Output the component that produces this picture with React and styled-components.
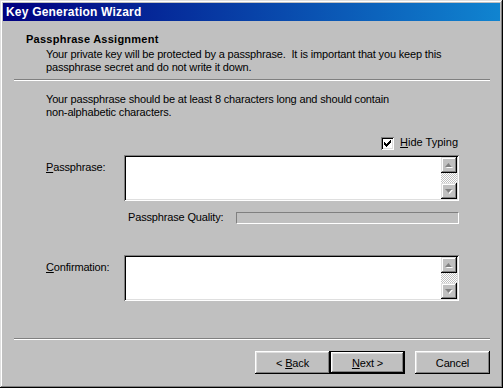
import React from 'react';
import styled, { createGlobalStyle } from 'styled-components';

const GlobalStyle = createGlobalStyle`
  html, body {
    margin: 0;
    padding: 0;
    background: #c0c0c0;
  }
  body {
    font-family: "Liberation Sans", Arial, sans-serif;
    font-size: 11px;
    letter-spacing: -0.16px;
    color: #000;
  }
  * {
    box-sizing: border-box;
  }
`;

const Window = styled.div`
  width: 503px;
  height: 388px;
  padding: 3px;
  display: flex;
  flex-direction: column;
  background: #c0c0c0;
  box-shadow: inset -1px -1px #000, inset 1px 1px #dfdfdf,
    inset -2px -2px #808080, inset 2px 2px #fff;
`;

const TitleBar = styled.div`
  height: 18px;
  padding-left: 3px;
  display: flex;
  align-items: center;
  background: linear-gradient(90deg, #000080, #1084d0);
  color: #fff;
  font-weight: bold;
  font-size: 12px;
  letter-spacing: 0.2px;
  line-height: 13px;
`;

const Header = styled.div`
  padding: 12px 0 5px 23px;
  line-height: 13px;
`;

const HeaderTitle = styled.div`
  font-weight: bold;
  letter-spacing: 0.25px;
  margin-bottom: 2px;
`;

const HeaderText = styled.div`
  padding-left: 20px;
  white-space: pre;
`;

const Separator = styled.div`
  height: 2px;
  margin: 0 10px 0 11px;
  border-top: 1px solid #808080;
  border-bottom: 1px solid #fff;
`;

const Body = styled.div`
  flex: 1;
  padding: 12px 41px 0 43px;
  display: flex;
  flex-direction: column;
  line-height: 13px;
`;

const Instructions = styled.div`
  white-space: pre;
`;

const CheckRow = styled.label`
  margin-top: 17px;
  height: 14px;
  display: flex;
  justify-content: flex-end;
  align-items: flex-start;
  gap: 6px;
  padding-right: 1px;
  letter-spacing: 0;
`;

const CheckBox = styled.span`
  width: 13px;
  height: 13px;
  margin-top: 1px;
  padding: 3px;
  background: #fff;
  box-shadow: inset 1px 1px #808080, inset -1px -1px #fff,
    inset 2px 2px #000, inset -2px -2px #dfdfdf;
  display: flex;
`;

const FieldRow = styled.div`
  display: flex;
  margin-top: ${p => p.$top}px;
`;

const Label = styled.div`
  width: 78px;
  padding-top: 6px;
`;

const TextBox = styled.div`
  flex: 1;
  height: 46px;
  padding: 2px;
  background: #fff;
  display: flex;
  justify-content: flex-end;
  box-shadow: inset 1px 1px #808080, inset -1px -1px #fff,
    inset 2px 2px #000, inset -2px -2px #dfdfdf;
`;

const ScrollBar = styled.div`
  width: 16px;
  display: flex;
  flex-direction: column;
`;

const ScrollTrack = styled.div`
  flex: 1;
  background: repeating-conic-gradient(#fff 0 25%, #c0c0c0 0 50%) 0 0 / 2px 2px;
`;

const ScrollButton = styled.div`
  height: 16px;
  background: #c0c0c0;
  display: flex;
  align-items: center;
  justify-content: center;
  box-shadow: inset -1px -1px #000, inset 1px 1px #dfdfdf,
    inset -2px -2px #808080, inset 2px 2px #fff;
`;

const QualityRow = styled.div`
  display: flex;
  align-items: center;
  height: 13px;
  margin-top: 10px;
  padding-left: 82px;
`;

const QualityLabel = styled.div`
  width: 108px;
`;

const QualityBar = styled.div`
  flex: 1;
  height: 12px;
  border-top: 1px solid #808080;
  border-left: 1px solid #808080;
  border-bottom: 1px solid #fff;
  border-right: 1px solid #fff;
`;

const Footer = styled.div`
  display: flex;
  justify-content: flex-end;
  padding: 11px 10px 11px 0;
`;

const Button = styled.button`
  width: 75px;
  height: 23px;
  margin-left: ${p => p.$gap}px;
  padding: 0;
  font-family: "Liberation Sans", Arial, sans-serif;
  font-size: 11px;
  letter-spacing: -0.16px;
  color: #000;
  background: #c0c0c0;
  border: ${p => (p.$default ? '1px solid #000' : 'none')};
  box-shadow: inset -1px -1px #000, inset 1px 1px #fff,
    inset -2px -2px #808080, inset 2px 2px #dfdfdf;
`;

const Key = styled.span`
  text-decoration: underline;
`;

function Arrow({ down }) {
  const pts = down ? '0,0 7,0 3.5,4' : '3.5,0 7,4 0,4';
  return (
    <svg width="8" height="5" viewBox="0 0 8 5">
      <polygon points={pts} fill="#fff" transform="translate(1,1)" />
      <polygon points={pts} fill="#808080" />
    </svg>
  );
}

function Check() {
  return (
    <svg width="7" height="7" viewBox="0 0 7 7" shapeRendering="crispEdges">
      <path
        d="M0 2h1v3H0z M1 3h1v3H1z M2 4h1v3H2z M3 3h1v3H3z M4 2h1v3H4z M5 1h1v3H5z M6 0h1v3H6z"
        fill="#000"
      />
    </svg>
  );
}

function MultiLineField() {
  return (
    <TextBox>
      <ScrollBar>
        <ScrollButton>
          <Arrow />
        </ScrollButton>
        <ScrollTrack />
        <ScrollButton>
          <Arrow down />
        </ScrollButton>
      </ScrollBar>
    </TextBox>
  );
}

export default function App() {
  return (
    <>
      <GlobalStyle />
      <Window>
        <TitleBar>Key Generation Wizard</TitleBar>
        <Header>
          <HeaderTitle>Passphrase Assignment</HeaderTitle>
          <HeaderText>
            {'Your private key will be protected by a passphrase.  It is important that you keep this\npassphrase secret and do not write it down.'}
          </HeaderText>
        </Header>
        <Separator />
        <Body>
          <Instructions>
            {'Your passphrase should be at least 8 characters long and should contain\nnon-alphabetic characters.'}
          </Instructions>
          <CheckRow>
            <CheckBox>
              <Check />
            </CheckBox>
            <span>
              <Key>H</Key>ide Typing
            </span>
          </CheckRow>
          <FieldRow $top={5}>
            <Label>
              <Key>P</Key>assphrase:
            </Label>
            <MultiLineField />
          </FieldRow>
          <QualityRow>
            <QualityLabel>Passphrase Quality:</QualityLabel>
            <QualityBar />
          </QualityRow>
          <FieldRow $top={31}>
            <Label>
              <Key>C</Key>onfirmation:
            </Label>
            <MultiLineField />
          </FieldRow>
        </Body>
        <Separator />
        <Footer>
          <Button $gap={0}>
            &lt; <Key>B</Key>ack
          </Button>
          <Button $gap={0} $default>
            <Key>N</Key>ext &gt;
          </Button>
          <Button $gap={10}>Cancel</Button>
        </Footer>
      </Window>
    </>
  );
}
